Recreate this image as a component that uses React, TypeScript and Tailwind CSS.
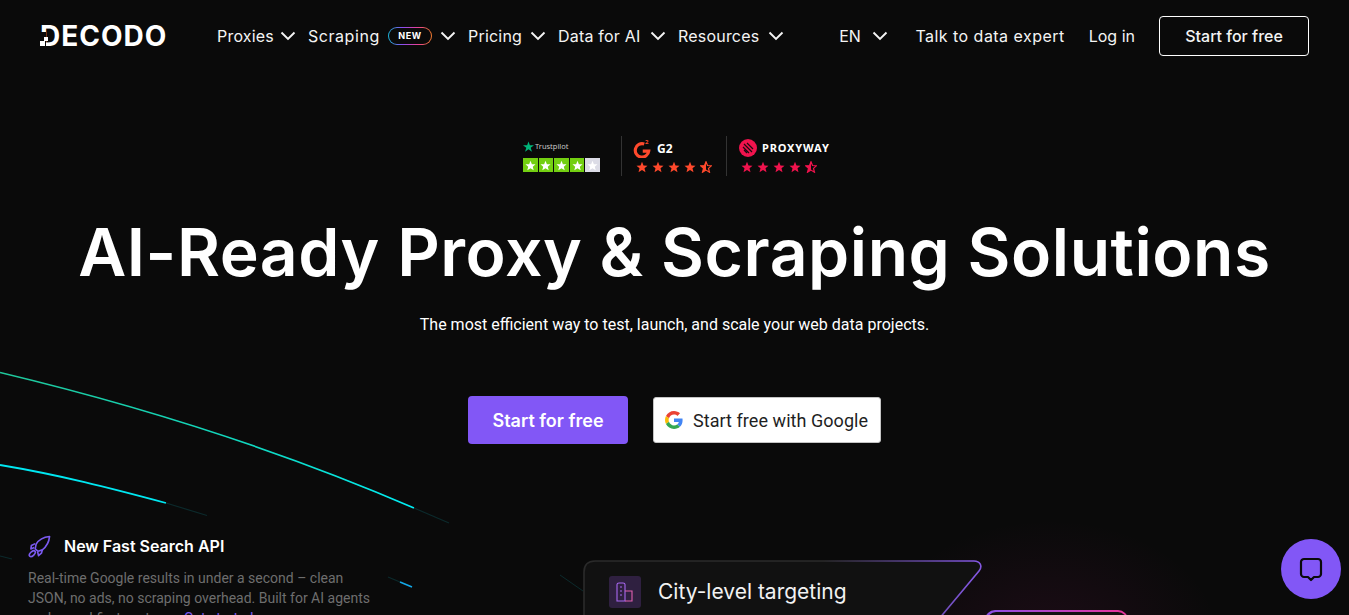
const poppins = "font-['Inter','Liberation_Sans',sans-serif]";
const roboto = "font-['Roboto','Liberation_Sans',sans-serif]";

const navItems = [
  { label: 'Proxies', width: 'w-[55px] tracking-[0.2px]' },
  { label: 'Scraping', width: 'w-[72px] tracking-[0.55px]', badge: true },
  { label: 'Pricing', width: 'w-[54px] tracking-[0.2px]' },
  { label: 'Data for AI', width: 'w-[84px] tracking-[0.2px]' },
  { label: 'Resources', width: 'w-[82px] tracking-[0.2px]' }
];

function Chevron({ className }: { className?: string }) {
  return (
    <svg className={className} width="16" height="10" viewBox="0 0 16 10" fill="none" stroke="currentColor" strokeWidth="1.9">
      <path d="M1.500 1.500L8 8l6.500-6.500" />
    </svg>
  );
}

function Star({ fill, half, size = 12 }: { fill: string; half?: boolean; size?: number }) {
  const pts = '12,1.5 15,9 23,9.5 17,14.7 19,22.5 12,18.2 5,22.5 7,14.7 1,9.5 9,9';
  return (
    <svg width={size} height={size} viewBox="0 0 24 24">
      {half ? (
        <>
          <polygon points={pts} fill="none" stroke={fill} strokeWidth="2.4" />
          <polygon points="12,1.5 12,18.2 5,22.5 7,14.7 1,9.5 9,9" fill={fill} />
        </>
      ) : (
        <polygon points={pts} fill={fill} />
      )}
    </svg>
  );
}

function Stars({ fill }: { fill: string }) {
  return (
    <div className="flex gap-[4px]">
      <Star fill={fill} />
      <Star fill={fill} />
      <Star fill={fill} />
      <Star fill={fill} />
      <Star fill={fill} half />
    </div>
  );
}

function Logo() {
  return (
    <div className="relative h-[20px] w-[125px]">
      <span className="block font-['Inter',sans-serif] text-[28px] leading-[20px] font-bold tracking-[1px] text-white">DECODO</span>
      <span className="absolute top-[6px] left-0 h-[14px] w-[6px] bg-[#0a0a0a]" />
      <span className="absolute top-[15px] left-0 h-[5px] w-[5px] bg-white" />
      <span className="absolute top-[11px] left-[4px] h-[4px] w-[4px] bg-white" />
    </div>
  );
}

function Nav() {
  return (
    <header className={`flex h-[72px] items-center px-[40px] text-[16px] text-[#f4f4f4] ${poppins}`}>
      <Logo />
      <nav className="ml-[52px] flex items-center gap-[12px]">
        {navItems.map((item) => (
          <div key={item.label} className="flex items-center">
            <span className={`${item.width} whitespace-nowrap`}>{item.label}</span>
            {item.badge && (
              <span className="ml-[8px] rounded-full bg-[linear-gradient(90deg,#19b5d8,#8b4df0,#e8409a,#ef7a2a)] p-px">
                <span className="flex h-[16px] w-[42px] items-center justify-center rounded-full bg-[#0a0a0a] text-[9px] font-bold tracking-[0.6px] text-white">
                  NEW
                </span>
              </span>
            )}
            <Chevron className="ml-[8px]" />
          </div>
        ))}
      </nav>
      <div className="ml-auto flex items-center">
        <span className="tracking-[-0.3px]">EN</span>
        <Chevron className="ml-[12px]" />
        <span className="ml-[27px] whitespace-nowrap tracking-[0.47px]">Talk to data expert</span>
        <span className="ml-[24px] whitespace-nowrap">Log in</span>
        <button className="ml-[24px] h-[40px] w-[150px] rounded-[4px] border border-white font-medium">Start for free</button>
      </div>
    </header>
  );
}

function Ratings() {
  return (
    <div className="flex h-[40px] items-center justify-center pl-[5px]">
      <div className="w-[77px]">
        <div className="flex items-center gap-[1px] text-[7.5px] leading-[12px] text-[#c8c8c8]">
          <svg width="11" height="11" viewBox="0 0 24 24">
            <polygon points="12,1 15,9.5 24,9.5 16.8,14.8 19.5,23.5 12,18 4.5,23.5 7.2,14.8 0,9.5 9,9.5" fill="#00b67a" />
          </svg>
          Trustpilot
        </div>
        <div className="mt-[6px] flex gap-[1px]">
          {['#73cf11', '#73cf11', '#73cf11', '#73cf11', '#dcdce6'].map((c, i) => (
            <div key={i} className={`flex h-[14px] w-[15px] items-center justify-center ${i === 4 ? 'bg-[#dcdce6]' : 'bg-[#73cf11]'}`}>
              <Star fill="#ffffff" size={11} />
            </div>
          ))}
        </div>
      </div>
      <div className="mr-[11px] ml-[21px] h-[40px] w-px bg-[#333333]" />
      <div className="mr-[14px] flex w-[79px] flex-col gap-[3px]">
        <div className="flex items-center gap-[6px] text-[12px] font-bold text-white">
          <svg width="18" height="19" viewBox="0 0 24 25" fill="none">
            <path d="M15 6.500A9 9 0 1 0 21 16h-8" stroke="#ff492c" strokeWidth="4.200" />
            <text x="16" y="7" fontSize="8" fill="#ff492c" fontWeight="700">2</text>
          </svg>
          G2
        </div>
        <div className="pl-[3px]">
          <Stars fill="#ff492c" />
        </div>
      </div>
      <div className="h-[40px] w-px bg-[#333333]" />
      <div className="ml-[12px] flex w-[92px] flex-col gap-[4px]">
        <div className="flex items-center gap-[5px] text-[11px] font-bold tracking-[0.85px] text-white">
          <svg width="18" height="18" viewBox="0 0 18 18">
            <circle cx="9" cy="9" r="9" fill="#f0134d" />
            <path d="M5 5l8 8M4 8l6 6M8 4l6 6M5 11l3 3" stroke="#1a0a10" strokeWidth="1.2" />
          </svg>
          PROXYWAY
        </div>
        <div className="pl-[2px]">
          <Stars fill="#f0134d" />
        </div>
      </div>
    </div>
  );
}

function GoogleIcon() {
  return (
    <svg width="18" height="18" viewBox="0 0 48 48">
      <path fill="#EA4335" d="M24 9.500c3.500 0 6.700 1.200 9.200 3.600l6.900-6.900C35.900 2.400 30.500 0 24 0 14.600 0 6.500 5.400 2.600 13.200l8 6.200C12.500 13.600 17.800 9.500 24 9.500z" />
      <path fill="#4285F4" d="M46.900 24.500c0-1.600-.1-3.100-.4-4.500H24v9h12.900c-.6 3-2.200 5.500-4.700 7.200l7.700 6c4.500-4.200 7-10.300 7-17.700z" />
      <path fill="#FBBC05" d="M10.500 28.600c-.5-1.400-.8-3-.8-4.600s.3-3.200.8-4.600l-8-6.200C.9 16.500 0 20.100 0 24s.9 7.500 2.600 10.800l7.900-6.200z" />
      <path fill="#34A853" d="M24 48c6.500 0 11.900-2.100 15.900-5.800l-7.700-6c-2.200 1.500-4.900 2.300-8.200 2.300-6.200 0-11.500-4.200-13.400-9.800l-8 6.200C6.500 42.600 14.600 48 24 48z" />
    </svg>
  );
}

function Hero() {
  return (
    <section className="flex flex-col items-center pt-[64px]">
      <Ratings />
      <h1 className={`mt-[36px] text-[66px] leading-[80px] font-semibold tracking-[0.55px] whitespace-nowrap text-white ${poppins}`}>
        AI-Ready Proxy &amp; Scraping Solutions
      </h1>
      <p className={`mt-[21px] text-[16px] leading-[24px] text-white ${roboto}`}>
        The most efficient way to test, launch, and scale your web data projects.
      </p>
      <div className="mt-[59px] flex items-center gap-[25px]">
        <button className={`h-[48px] w-[160px] rounded-[4px] bg-[#8257f6] text-[18px] font-semibold text-white ${poppins}`}>Start for free</button>
        <button className={`flex h-[46px] w-[228px] items-center gap-[10px] rounded-[3px] border border-[#c4c4c4] bg-white pl-[11px] text-[18px] tracking-[0.05px] text-[#1f1f1f] ${roboto}`}>
          <GoogleIcon />
          Start free with Google
        </button>
      </div>
    </section>
  );
}

function Promo() {
  return (
    <div className="absolute top-[534px] left-[28px] w-[350px]">
      <div className="flex items-center gap-[13px]">
        <svg width="23" height="23" viewBox="0 0 24 24" fill="none" stroke="#7b5af0" strokeWidth="1.700" strokeLinejoin="round">
          <path d="M22.500 1.500c-6 .5-11 3-14 8l-1 5 3 2.500 4.500-1.500c4.500-3.500 7-8.500 7.500-14z" />
          <path d="M7.500 9L3.500 11 3 14.500l3.500-1.500" />
          <path d="M15 15.500L14 19l-3 2.500-1-4" />
          <ellipse cx="4.500" cy="19.500" rx="3.800" ry="2.100" transform="rotate(-45 4.500 19.500)" />
        </svg>
        <span className={`text-[16px] leading-[24px] font-semibold text-white ${poppins}`}>New Fast Search API</span>
      </div>
      <p className={`mt-[10px] text-[14px] leading-[20px] text-[#6e6e6e] ${roboto}`}>
        Real-time Google results in under a second – clean JSON, no ads, no scraping overhead. Built for AI agents and speed-first systems. <span className="text-[#7b5af0]">Get started</span>
      </p>
    </div>
  );
}

function CityCard() {
  return (
    <div className="absolute top-[560px] left-[583px] h-[90px] w-[400px]">
      <svg className="absolute inset-0" width="400" height="90" viewBox="0 0 400 90" fill="none">
        <defs>
          <linearGradient id="cardEdge" x1="240" y1="0" x2="390" y2="0" gradientUnits="userSpaceOnUse">
            <stop offset="0" stopColor="#2a2a2a" />
            <stop offset="1" stopColor="#8257e0" />
          </linearGradient>
        </defs>
        <path
          d="M12 1H391C397 1 400 6 396 11L330 90H12C5 90 1 85 1 78V12C1 5 5 1 12 1Z"
          fill="#111111"
          stroke="url(#cardEdge)"
          strokeWidth="1.600"
        />
      </svg>
      <div className="relative flex items-center pt-[16px] pl-[26px]">
        <div className="flex h-[32px] w-[32px] items-center justify-center rounded-[3px] bg-[#2f2040]">
          <svg width="18" height="20" viewBox="0 0 18 20" fill="none" strokeWidth="1.100">
            <path d="M1 19V2.500C1 1.500 2 1 3 1h4c1 0 2 .5 2 1.500V19H1z" stroke="#a868f0" />
            <path d="M9 9h7v10H9" stroke="#e060b0" />
            <path d="M4 5h2M4 9h2M4 13h2" stroke="#a868f0" />
          </svg>
        </div>
        <span className={`ml-[17px] text-[21px] leading-[32px] whitespace-nowrap text-[#f2f2f2] ${poppins}`}>City-level targeting</span>
      </div>
    </div>
  );
}

function Backdrop() {
  return (
    <>
      <div className="absolute top-[520px] left-[880px] h-[240px] w-[340px] rounded-full bg-[radial-gradient(closest-side,rgba(190,30,130,0.1),rgba(190,30,130,0))]" />
      <svg className="absolute top-0 left-0" width="1349" height="615" viewBox="0 0 1349 615" fill="none">
        <defs>
          <linearGradient id="lineA" x1="0" y1="372" x2="414" y2="508" gradientUnits="userSpaceOnUse">
            <stop offset="0" stopColor="#1fc79a" />
            <stop offset="0.6" stopColor="#10d8c0" />
            <stop offset="1" stopColor="#00eef5" />
          </linearGradient>
        </defs>
        <path d="M0 372.500C140 406 280 450 414 508" stroke="url(#lineA)" strokeWidth="1.700" />
        <path d="M414 508L449 523" stroke="#0c2a2c" strokeWidth="1.200" />
        <path d="M0 465C60 475 110 488 166 503" stroke="#00e8f2" strokeWidth="1.800" />
        <path d="M166 503L207 515.500" stroke="#0c2a2c" strokeWidth="1.200" />
        <path d="M0 556L12 559" stroke="#0c2a2c" strokeWidth="1.200" />
        <path d="M388 577L400 582" stroke="#0c2a2c" strokeWidth="1.200" />
        <path d="M400 582L412 587" stroke="#13a8e8" strokeWidth="1.600" />
        <path d="M560 575L583 591" stroke="#0c2a2c" strokeWidth="1" />
      </svg>
    </>
  );
}

export default function App() {
  return (
    <div className="relative h-[615px] overflow-hidden bg-[#0a0a0a]">
      <Backdrop />
      <div className="relative">
        <Nav />
        <Hero />
      </div>
      <Promo />
      <CityCard />
      <div className="absolute top-[610px] left-[985px] h-[40px] w-[143px] rounded-[10px] bg-[linear-gradient(90deg,#8a50e8,#e8349a)] p-[1.5px]">
        <div className="h-full rounded-[9px] bg-[#111111]" />
      </div>
      <button className="absolute top-[539px] left-[1281px] flex h-[60px] w-[60px] items-center justify-center rounded-full bg-[#8257f6]">
        <svg width="24" height="25" viewBox="0 0 24 25" fill="none" stroke="#0a0a0a" strokeWidth="2.200" strokeLinejoin="round">
          <path d="M5 2h14c1.500 0 3 1.200 3 3v12c0 1.500-1.500 3-3 3h-4l-3 3-3-3H5c-1.500 0-3-1.500-3-3V5c0-1.800 1.500-3 3-3z" />
        </svg>
      </button>
    </div>
  );
}
